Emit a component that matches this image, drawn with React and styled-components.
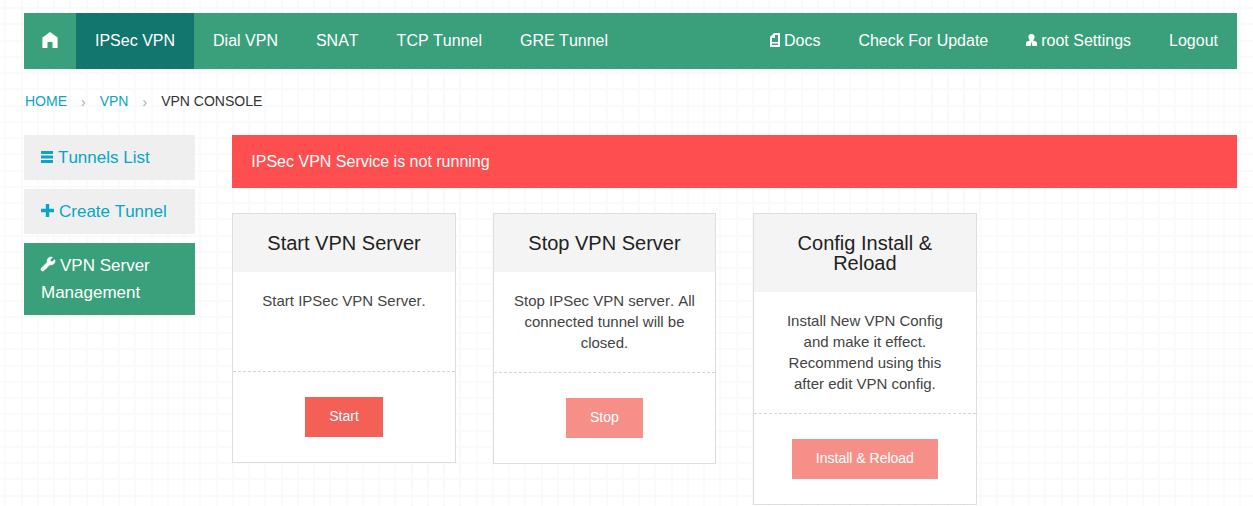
import React from "react";
import styled, { createGlobalStyle, css } from "styled-components";
import { FaWrench } from "react-icons/fa";

const GREEN = "#39a07b";
const LINK = "#08a5c8";

/* Four grid lines per 65px tile keep the graph paper evenly spaced. */
const lines = (stops) =>
  stops.map((s) => `transparent ${s}px, #fafafa ${s}px, #fafafa ${s + 2}px, transparent ${s + 2}px`).join(", ");

const GlobalStyle = createGlobalStyle`
  *, *::before, *::after { box-sizing: border-box; }
  body {
    margin: 0;
    color: #222;
    font-family: "Liberation Sans", Arial, sans-serif;
    font-size: 16px;
    font-kerning: none;
    background-color: #fff;
    background-image:
      linear-gradient(to right, ${lines([4, 21, 37, 53])}),
      linear-gradient(to bottom, ${lines([7, 23, 40, 56])});
    background-size: 65px 65px;
  }
  a { text-decoration: none; }
`;

const Page = styled.div`
  padding: 13px 16px 0 24px;
`;

const NavBar = styled.nav`
  display: flex;
  justify-content: space-between;
  height: 56px;
  background: ${GREEN};
`;

const NavGroup = styled.div`
  display: flex;
`;

const NavLink = styled.a`
  display: flex;
  align-items: center;
  gap: 4px;
  padding: 0 ${(p) => (p.$icon ? "18px" : "19px")};
  color: #fff;
  line-height: 20px;
  white-space: nowrap;
  ${(p) => p.$active && css`background: #12766f;`}

  svg { margin-bottom: 2px; }
`;

const Breadcrumbs = styled.ol`
  display: flex;
  align-items: center;
  gap: 14px;
  margin: 0;
  padding: 22px 1px 24px;
  list-style: none;
  font-size: 14px;
  line-height: 20px;
  text-transform: uppercase;
  color: #333;

  a { color: ${LINK}; }
`;

const Separator = styled.li`
  padding-top: 3px;
  color: #aaa;
  line-height: 17px;
`;

const Columns = styled.div`
  display: grid;
  grid-template-columns: repeat(12, minmax(0, 1fr));
  column-gap: 37px;
  align-items: start;
`;

const SideMenu = styled.aside`
  grid-column: span 2;
  display: flex;
  flex-direction: column;
  gap: 9px;
`;

const SideLink = styled.a`
  padding: 9px 17px;
  font-size: 17px;
  line-height: 27px;
  color: ${(p) => (p.$active ? "#fff" : LINK)};
  background: ${(p) => (p.$active ? GREEN : "#efefef")};

  svg { margin-right: 5px; }
`;

const WrenchIcon = styled(FaWrench).attrs({ size: 14, "aria-hidden": true })`
  overflow: visible;
  stroke: currentColor;
  stroke-width: 24;
`;

const Content = styled.main`
  grid-column: span 10;
`;

const Alert = styled.div`
  padding: 17px 19px 16px;
  margin-bottom: 25px;
  line-height: 20px;
  color: #fff;
  background: #ff4e50;
`;

const CardGrid = styled.div`
  display: grid;
  grid-template-columns: repeat(4, minmax(0, 1fr));
  gap: 37px;
  align-items: start;
`;

const CardBox = styled.section`
  border: 1px solid #ddd;
  background: #fff;
  text-align: center;
`;

const CardTitle = styled.h2`
  margin: 0;
  padding: 19px;
  font-size: 20px;
  font-weight: 400;
  line-height: 20px;
  background: #f4f4f4;
`;

const CardText = styled.p`
  min-height: 99px;
  margin: 0;
  padding: 18px 19px 19px;
  font-size: 15px;
  line-height: 21px;
  color: #444;
`;

const CardAction = styled.div`
  padding: 25px 19px;
  border-top: 1px dashed #d4d4d4;
`;

const ActionButton = styled.button`
  display: block;
  height: 40px;
  margin: 0 auto;
  padding: 0 24px 2px;
  border: 0;
  font: 14px "Liberation Sans", Arial, sans-serif;
  color: #fff;
  background: #f45f56;

  &:disabled { background: #f78f89; }
`;

const Icon = styled.svg.attrs({ "aria-hidden": true })`
  flex: none;
  fill: currentColor;
`;

const HomeIcon = () => (
  <Icon width="16" height="16" viewBox="0 0 16 16">
    <path d="M8 0 L15.6 5.6 V16 H10.5 V10 H5.5 V16 H.4 V5.6 Z" />
  </Icon>
);

const PageIcon = () => (
  <Icon width="10" height="14" viewBox="0 0 10 14">
    <path fillRule="evenodd" d="M4 0 H10 V14 H0 V4 Z M5 2 V5 H2 V9 H8 V2 Z M2 10.5 V12 H8 V10.5 Z" />
  </Icon>
);

const UserIcon = () => (
  <Icon width="11" height="12" viewBox="0 0 11 12">
    <path d="M5.5 0 C7.8 0 8.8 1.4 8.6 3.2 C8.4 4.7 7.7 5.6 7.2 6.2 V6.6 L10 7.4 Q11 8 11 9.2 V12 H6.4 L5.8 9.6 L6.1 8.4 H4.9 L5.2 9.6 L4.6 12 H0 V9.2 Q0 8 1 7.4 L3.8 6.6 V6.2 C3.3 5.6 2.6 4.7 2.4 3.2 C2.2 1.4 3.2 0 5.5 0 Z" />
  </Icon>
);

const ListIcon = () => (
  <Icon width="12" height="12" viewBox="0 0 12 12">
    <path d="M0 0 H12 V3 H0 Z M0 4.5 H12 V7.5 H0 Z M0 9 H12 V12 H0 Z" />
  </Icon>
);

const PlusIcon = () => (
  <Icon width="13" height="13" viewBox="0 0 13 13">
    <path d="M4.8 0 H8.2 V4.8 H13 V8.2 H8.2 V13 H4.8 V8.2 H0 V4.8 H4.8 Z" />
  </Icon>
);

const cards = [
  { title: "Start VPN Server", text: "Start IPSec VPN Server.", action: "Start", disabled: false },
  { title: "Stop VPN Server", text: "Stop IPSec VPN server. All connected tunnel will be closed.", action: "Stop", disabled: true },
  {
    title: "Config Install & Reload",
    text: "Install New VPN Config and make it effect. Recommend using this after edit VPN config.",
    action: "Install & Reload",
    disabled: true,
  },
];

export default function App() {
  return (
    <>
      <GlobalStyle />
      <Page>
        <NavBar>
          <NavGroup>
            <NavLink href="#home" $icon aria-label="Home"><HomeIcon /></NavLink>
            <NavLink href="#ipsec" $active>IPSec VPN</NavLink>
            <NavLink href="#dial">Dial VPN</NavLink>
            <NavLink href="#snat">SNAT</NavLink>
            <NavLink href="#tcp">TCP Tunnel</NavLink>
            <NavLink href="#gre">GRE Tunnel</NavLink>
          </NavGroup>
          <NavGroup>
            <NavLink href="#docs"><PageIcon />Docs</NavLink>
            <NavLink href="#update">Check For Update</NavLink>
            <NavLink href="#settings"><UserIcon />root Settings</NavLink>
            <NavLink href="#logout">Logout</NavLink>
          </NavGroup>
        </NavBar>

        <Breadcrumbs>
          <li><a href="#home">Home</a></li>
          <Separator aria-hidden="true">›</Separator>
          <li><a href="#vpn">VPN</a></li>
          <Separator aria-hidden="true">›</Separator>
          <li>VPN Console</li>
        </Breadcrumbs>

        <Columns>
          <SideMenu>
            <SideLink href="#list"><ListIcon />Tunnels List</SideLink>
            <SideLink href="#create"><PlusIcon />Create Tunnel</SideLink>
            <SideLink href="#manage" $active><WrenchIcon />VPN Server Management</SideLink>
          </SideMenu>
          <Content>
            <Alert role="alert">IPSec VPN Service is not running</Alert>
            <CardGrid>
              {cards.map((card) => (
                <CardBox key={card.title}>
                  <CardTitle>{card.title}</CardTitle>
                  <CardText>{card.text}</CardText>
                  <CardAction>
                    <ActionButton type="button" disabled={card.disabled}>{card.action}</ActionButton>
                  </CardAction>
                </CardBox>
              ))}
            </CardGrid>
          </Content>
        </Columns>
      </Page>
    </>
  );
}
